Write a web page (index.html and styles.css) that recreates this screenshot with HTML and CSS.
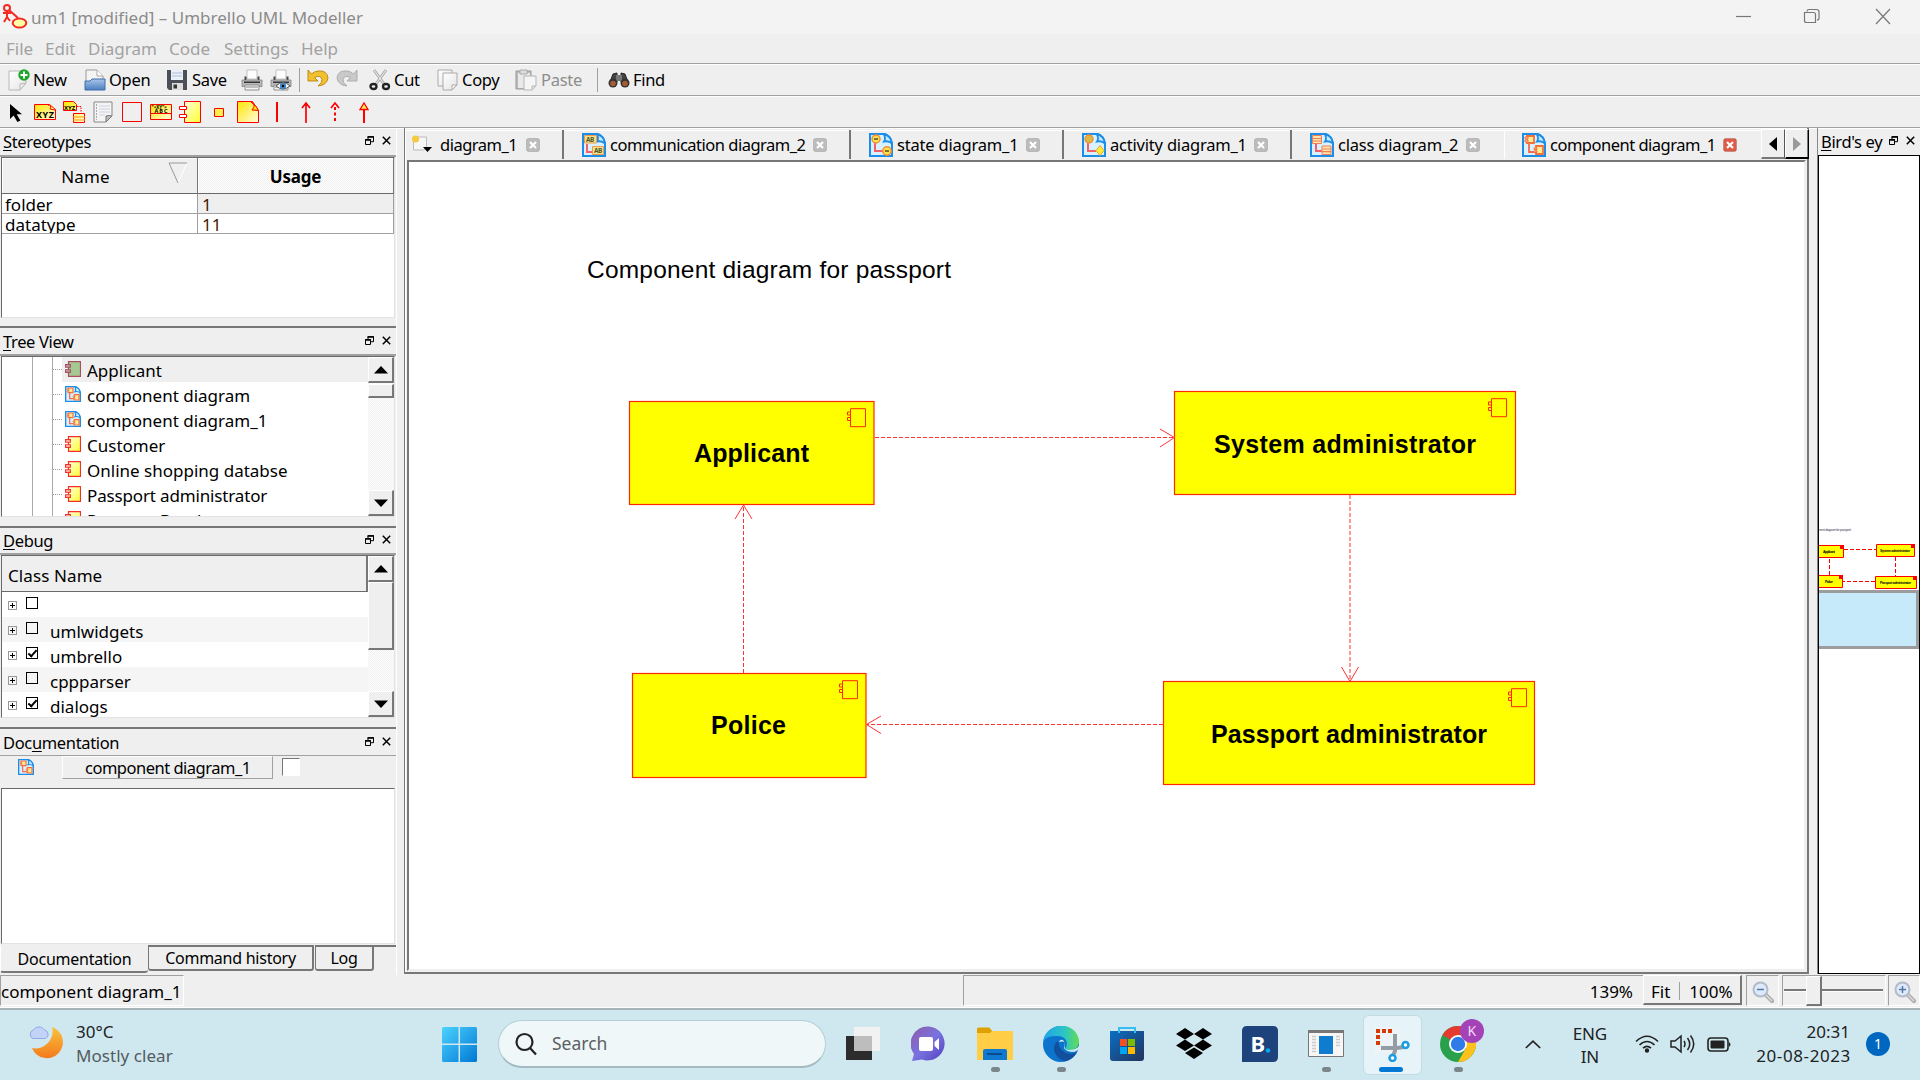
FILE: index.html
```html
<!DOCTYPE html>
<html lang="en">
<head>
<meta charset="utf-8">
<title>um1 [modified] – Umbrello UML Modeller</title>
<link rel="stylesheet" href="styles.css">
</head>
<body>
<svg class="defs" aria-hidden="true">
  <defs>
    <linearGradient id="gYellow" x1="0" x2="1" y1="0" y2="1"><stop offset="0" stop-color="#ffffe0"/><stop offset="1" stop-color="#ffff30"/></linearGradient>
    <linearGradient id="gGold" x1="0" x2="1" y1="0" y2="1"><stop offset="0" stop-color="#ffe600"/><stop offset="1" stop-color="#fffde0"/></linearGradient>
    <linearGradient id="gBlue" x1="0" x2="1" y1="0" y2="1"><stop offset="0" stop-color="#4cd3ff"/><stop offset="1" stop-color="#0078d4"/></linearGradient>
    <linearGradient id="gFolder" x1="0" x2="0" y1="0" y2="1"><stop offset="0" stop-color="#a9c6ea"/><stop offset="1" stop-color="#4c7fc0"/></linearGradient>
    <linearGradient id="gPaper" x1="0" x2="1" y1="0" y2="1"><stop offset="0" stop-color="#fff"/><stop offset="1" stop-color="#e4e4e4"/></linearGradient>
    <symbol id="component" viewBox="0 0 16 16"><path d="M3.5.7h12v14.6h-12z" fill="url(#gYellow)" stroke="#f3302a" stroke-width="1.2"/><path d="M.6 3.6h4.8v2.6H.6zM.6 8.8h4.8v2.6H.6z" fill="#ffd9c0" stroke="#f3302a" stroke-width="1.1"/></symbol>
    <symbol id="component-sel" viewBox="0 0 16 16"><path d="M3.5.7h12v14.6h-12z" fill="#a5c992" stroke="#a8505e" stroke-width="1.2"/><path d="M.6 3.6h4.8v2.6H.6zM.6 8.8h4.8v2.6H.6z" fill="#b9a9b5" stroke="#a8505e" stroke-width="1.1"/></symbol>
    <symbol id="page" viewBox="0 0 24 24"><path d="M1 1h15q5 2 7 9v13H1z" fill="#d9f1ff" stroke="#1c8ee8" stroke-width="2"/><path d="M15 1.500q7 1 8 9-3-3-8-2 2-3 0-7z" fill="#c4e8ff" stroke="#1c8ee8" stroke-width="1.800"/></symbol>
    <symbol id="dia-component" viewBox="0 0 24 24"><use href="#page"/><path d="M7 10v9h7" fill="none" stroke="#f06a50" stroke-width="1.800"/><path d="M5 3h7v7H5zM14 13h7v8h-7z" fill="#ffec9a" stroke="#f5703a" stroke-width="1.800"/><path d="M3 4h3v2H3zM3 7h3v2H3zM12 15h3v1.500h-3zM12 18h3v1.500h-3z" fill="#ffd9c0" stroke="#f5703a"/></symbol>
    <symbol id="dia-communication" viewBox="0 0 24 24"><use href="#page"/><path d="M5 11v8h6" fill="none" stroke="#f4606a" stroke-width="2"/><path d="M2.500 2.500h12v7.500h-12zM10.500 13.500h11v8h-11z" fill="#f3e38c" stroke="#f09a4a"/><text x="4" y="8.700" font-size="6.500" font-weight="700" fill="#55552a">AB</text><text x="12" y="20" font-size="6.500" font-weight="700" fill="#55552a">AB</text></symbol>
    <symbol id="dia-state" viewBox="0 0 24 24"><use href="#page"/><path d="M6 9v9h8" fill="none" stroke="#f4606a" stroke-width="2"/><circle cx="7" cy="6" r="4" fill="#ffe14e" stroke="#f0903a" stroke-width="1.500"/><circle cx="18" cy="18" r="4.200" fill="#ffe14e" stroke="#f0903a" stroke-width="1.500"/><path d="M5 6h4M16 18h4" stroke="#86702a" stroke-width="2"/></symbol>
    <symbol id="dia-activity" viewBox="0 0 24 24"><use href="#page"/><path d="M6 9v9h8" fill="none" stroke="#f4606a" stroke-width="2"/><circle cx="7" cy="6" r="4" fill="#d9b84a" stroke="#f0903a" stroke-width="1.500"/><path d="M18 12.500l4 5-4 5-4-5z" fill="#ffee30" stroke="#f0a03a"/></symbol>
    <symbol id="dia-class" viewBox="0 0 24 24"><use href="#page"/><path d="M6 10v8h7" fill="none" stroke="#f4606a" stroke-width="2"/><path d="M2.500 2.500h9v8h-9zM12 13h9v8.500h-9z" fill="#ffe3b0" stroke="#f08052"/><path d="M3 5.500h8.500M12.500 16h8.500M3 8h8.500M12.500 18.700h8.500" stroke="#f08052" stroke-width="1.200"/></symbol>
    <symbol id="printer" viewBox="0 0 22 22"><path d="M6 1h10v9H6z" fill="#fdfdfd" stroke="#aaa" stroke-width=".7"/><path d="M3.500 7.500h2v4h11v-4h2V12h-15z" fill="#444"/><path d="M1 11h20v6.500H1z" fill="#bababa" stroke="#777" stroke-width=".7"/><path d="M3 12.500h16v1.500H3z" fill="#333"/><path d="M4 16h14v5H4z" fill="#f4f4f4" stroke="#777" stroke-width=".8"/><path d="M5 18h12" stroke="#888"/></symbol>
    <symbol id="float" viewBox="0 0 9 9"><path d="M3 3V.7h5.500v5H6" fill="none" stroke="#000"/><path d="M2.500 1h6.500M0 4h6" stroke="#000" stroke-width="1.700"/><path d="M.5 3.500h5v5h-5z" fill="none" stroke="#000"/></symbol>
    <symbol id="cross" viewBox="0 0 9 9"><path d="M.8.8l7.400 7.400M8.200.8L.8 8.200" stroke="#000" stroke-width="1.500"/></symbol>
    <symbol id="up" viewBox="0 0 14 8"><path d="M7 0l7 7.500H0z"/></symbol>
    <symbol id="down" viewBox="0 0 14 8"><path d="M7 8L0 .5h14z"/></symbol>
    <symbol id="tabclose" viewBox="0 0 14 14"><rect x=".5" y=".5" width="13" height="13" rx="2" fill="currentColor" stroke="#0002"/><path d="M4 4l6 6M10 4l-6 6" stroke="#fff" stroke-width="2.200"/></symbol>
    <symbol id="lens" viewBox="0 0 22 22"><path d="M13 13l7 7" stroke="#aaa" stroke-width="4" stroke-linecap="round"/><path d="M13 13l7 7" stroke="#ddd" stroke-width="1.500"/><circle cx="8.500" cy="8.500" r="7" fill="#dceafb" stroke="#b3bac8" stroke-width="2"/></symbol>
    <symbol id="node" viewBox="0 0 20 20"><path d="M4.500.7h15v18h-15z" fill="none" stroke="#ff2a00"/><path d="M1.500 4h3v3h-3zM1.500 9.500h3v3h-3z" fill="none" stroke="#ff2a00"/></symbol>
  </defs>
</svg>

<header class="titlebar">
  <svg class="logo" viewBox="0 0 26 26"><g fill="none" stroke="#f22b22" stroke-width="2"><circle cx="5" cy="4" r="3"/><path d="M5 7v6M1 9h8M5 13l-3 5M5 13l3 4M7 6l9 8"/></g><ellipse cx="17.500" cy="19" rx="6.800" ry="4.600" fill="#ffffa8" stroke="#f22b22" stroke-width="2"/></svg>
  <h1 class="title">um1 [modified] – Umbrello UML Modeller</h1>
  <svg class="winbtns" viewBox="0 0 176 34" fill="none" stroke="#777" stroke-width="1.200"><path d="M16 16.500h15"/><path d="M84.500 13.500h9q2 0 2 2v8H86.500q-2 0-2-2zM87 12.500q0-2 2-2h7.500q2.500 0 2.500 2.500V19q0 2-2 2" transform="translate(0 -1)"/><path d="M156 9l14 15M170 9l-14 15"/></svg>
</header>

<nav class="menubar"><span>File</span><span>Edit</span><span>Diagram</span><span>Code</span><span>Settings</span><span>Help</span></nav>

<div class="toolbar main-tools">
  <div class="tool"><svg viewBox="0 0 22 22"><path d="M1 2h17v12l-6 7H1z" fill="url(#gPaper)" stroke="#b8b8b8"/><path d="M18 14l-6 7v-6z" fill="#eee" stroke="#b8b8b8"/><circle cx="16" cy="6" r="5.700" fill="#1fa62b"/><path d="M16 2.500v7M12.500 6h7" stroke="#fff" stroke-width="2"/></svg>New</div>
  <div class="tool"><svg viewBox="0 0 22 22"><path d="M2 1h11l6 6v9H2z" fill="#f4f4f4" stroke="#999"/><path d="M13 1v6h6" fill="#fff" stroke="#aaa"/><path d="M1 12h5l2-2h13v11H1z" fill="url(#gFolder)" stroke="#3f6dab"/></svg>Open</div>
  <div class="tool"><svg class="disk" viewBox="0 0 22 22"><path d="M1 1h20v20H3l-2-2z" fill="#4a4f58"/><path d="M5 1h12v10H5z" fill="#e9f0f8"/><path d="M6 4h10M6 7h10" stroke="#a9bdd3"/><path d="M6 14h11v7H6z" fill="#ddd"/><path d="M7.500 15.500h3.500v4H7.500z" fill="#333"/></svg>Save</div>
  <div class="tool"><svg><use href="#printer"/></svg></div>
  <div class="tool"><svg viewBox="0 0 22 22"><use href="#printer"/><path d="M6 17q7-7 14 0-7 6-14 0z" fill="#fff" stroke="#555"/><circle cx="13" cy="17" r="3.200" fill="#4184c4"/><circle cx="13" cy="17" r="1.200"/></svg></div>
  <i class="sep"></i>
  <div class="tool"><svg class="raise" viewBox="0 0 22 20"><path d="M1 1v11h10L7.500 8.500q6-3 7.500 2 .5 3-4 6.500 9-1 10-8Q20 1 11 2 7 2.500 4.500 5z" fill="#f0c02e" stroke="#c08b12"/></svg></div>
  <div class="tool"><svg class="raise" viewBox="0 0 22 20"><path d="M21 1v11H11l3.500-3.500q-6-3-7.500 2-.5 3 4 6.500Q2 16 1 9 2 1 11 2q4 .5 6.500 3z" fill="#c9c9c9" stroke="#adadad"/></svg></div>
  <div class="tool"><svg viewBox="0 0 22 22"><path d="M5 1l10 14M17 1L7 15" stroke="#999" stroke-width="2.600"/><path d="M5 1l10 14M17 1L7 15" stroke="#eee" stroke-width="1.200"/><g fill="none" stroke="#222" stroke-width="2.300"><ellipse cx="4.500" cy="17.500" rx="3" ry="2.500"/><ellipse cx="17" cy="17.500" rx="3" ry="2.500"/></g></svg><span>Cut</span></div>
  <div class="tool"><svg viewBox="0 0 22 22" fill="url(#gPaper)" stroke="#aaa"><path d="M1 1h14v16H1z"/><path d="M6 4h14v12l-5 5H6z"/><path d="M20 16l-5 5v-5z"/></svg><span>Copy</span></div>
  <div class="tool off"><svg viewBox="0 0 22 22"><path d="M1 2h15v18H1z" fill="#bbb" stroke="#999"/><path d="M3 4h12v15H3z" fill="#e9e9e9"/><path d="M5 1h7v4H5z" fill="#ddd" stroke="#aaa"/><path d="M9 7h12v10l-4 4H9z" fill="#f5f5f5" stroke="#b5b5b5"/><path d="M21 17l-4 4v-4z" fill="#ddd" stroke="#bbb"/></svg><span>Paste</span></div>
  <i class="sep"></i>
  <div class="tool"><svg viewBox="0 0 22 22"><path d="M5 5l4-1v9H2zM17 5l-4-1v9h7z" fill="#444" stroke="#222"/><path d="M8 6h6v6H8z" fill="#777"/><circle cx="5" cy="14" r="4.500" fill="#333"/><circle cx="17" cy="14" r="4.500" fill="#333"/><circle cx="5" cy="14.500" r="2.800" fill="#a65c34"/><circle cx="17" cy="14.500" r="2.800" fill="#a65c34"/></svg>Find</div>
</div>

<div class="toolbar shape-tools">
  <svg viewBox="0 0 22 22"><path d="M5 3v15l3.600-3.500 3.800 6.500 3-1.600-3.700-6.200H17z" fill="#000"/></svg>
  <svg viewBox="0 0 22 22"><path d="M.5 3.500h15l6 5v10H.5z" fill="url(#gGold)" stroke="red"/><path d="M14 4q4 0 2 4l5 1" fill="#ff3" stroke="red"/><text x="2" y="17" font-size="9" font-weight="700" textLength="18">XYZ</text></svg>
  <svg viewBox="0 0 22 22"><path d="M.5.500h10l3 3v6H.5zM10.500 12.500h11v9h-11z" fill="url(#gGold)" stroke="red"/><path d="M10 16h12M10 19h12" stroke="#f90"/><text x="1" y="8.500" font-size="6" font-weight="700">XYZ</text><path d="M14 5.500h4v6" fill="none" stroke="red" stroke-dasharray="1.500 1"/></svg>
  <svg viewBox="0 0 22 22"><path d="M2 1h18v14l-6 6H2z" fill="#f4f4f6" stroke="#888"/><path d="M7 5h11M7 8h11M7 11h11M7 14h6" stroke="#ccd3dc"/><path d="M4.500 3v16" stroke="#aaa" stroke-dasharray="2 1"/><path d="M20 15q-4-1-6 0l0 6z" fill="#bbb" stroke="#777"/></svg>
  <svg viewBox="0 0 22 22"><path d="M1.500 1.500h19v19h-19z" fill="none" stroke="red"/></svg>
  <svg viewBox="0 0 22 22"><path d="M.5 3.500h21v15H.5z" fill="url(#gGold)" stroke="red"/><path d="M.5 12.500h21" stroke="red"/><text x="1.500" y="7.500" font-size="4.500" font-weight="700">"&lt;XY"&gt;</text><text x="4.500" y="11.700" font-size="5.500" font-weight="700" textLength="13">ABC</text></svg>
  <svg viewBox="0 0 22 22"><path d="M5.500.5h16v21h-16z" fill="url(#gYellow)" stroke="red"/><path d="M.5 5.500h7v3h-7zM.5 13.500h7v3h-7z" fill="#fff" stroke="red"/></svg>
  <svg viewBox="0 0 22 22"><path d="M6.500 7.500h9v8h-9z" fill="#ffee50" stroke="red"/></svg>
  <svg viewBox="0 0 22 22"><path d="M.5.500h15l6 9v12H.5z" fill="url(#gGold)" stroke="red"/><path d="M14 1q6 2 1 8l6.500.5Q20 5 14 1z" fill="#ffe600" stroke="red"/></svg>
  <svg viewBox="0 0 22 22"><path d="M11 1v20" stroke="red" stroke-width="2"/></svg>
  <svg viewBox="0 0 22 22"><path d="M11 2v20M7 7l4-5 4 5" fill="none" stroke="red" stroke-width="1.700"/></svg>
  <svg viewBox="0 0 22 22"><path d="M11 6v16" stroke="red" stroke-width="2" stroke-dasharray="3 2.500"/><path d="M7 7l4-5 4 5" fill="none" stroke="red" stroke-width="1.700"/></svg>
  <svg viewBox="0 0 22 22"><path d="M11 9v13" stroke="red" stroke-width="2"/><path d="M7 8.500l4-6.500 4 6.500z" fill="#fe5" stroke="red" stroke-width="1.300"/></svg>
</div>

<main class="workspace">
  <aside class="docks">
    <section class="dock stereo">
      <div class="dock-title"><span><u>S</u>tereotypes</span><svg class="fl"><use href="#float"/></svg><svg class="cl"><use href="#cross"/></svg></div>
      <div class="sunken">
        <div class="st-grid">
          <div class="th">Name<svg class="sort" viewBox="0 0 20 22"><path d="M19 1L10 21" stroke="#fff" fill="none"/><path d="M19 1H1l9 20" stroke="#999" fill="none"/></svg></div>
          <div class="th usage">Usage</div>
          <div class="td">folder</div><div class="td num alt">1</div>
          <div class="td clip">datatype</div><div class="td num">11</div>
        </div>
      </div>
    </section>

    <section class="dock treeview">
      <div class="dock-title"><span><u>T</u>ree View</span><svg class="fl"><use href="#float"/></svg><svg class="cl"><use href="#cross"/></svg></div>
      <div class="sunken row">
        <div class="tree">
          <div class="leaf sel"><svg><use href="#component-sel"/></svg><span>Applicant</span></div>
          <div class="leaf"><svg><use href="#dia-component"/></svg><span>component diagram</span></div>
          <div class="leaf"><svg><use href="#dia-component"/></svg><span>component diagram_1</span></div>
          <div class="leaf"><svg><use href="#component"/></svg><span>Customer</span></div>
          <div class="leaf"><svg><use href="#component"/></svg><span>Online shopping databse</span></div>
          <div class="leaf"><svg><use href="#component"/></svg><span class="tight">Passport administrator</span></div>
          <div class="leaf"><svg><use href="#component"/></svg><span class="tight">Passport Database</span></div>
        </div>
        <div class="scroll"><b class="sb"><svg><use href="#up"/></svg></b><b class="thumb t1"></b><i></i><b class="sb"><svg><use href="#down"/></svg></b></div>
      </div>
    </section>

    <section class="dock debug">
      <div class="dock-title"><span><u>D</u>ebug</span><svg class="fl"><use href="#float"/></svg><svg class="cl"><use href="#cross"/></svg></div>
      <div class="sunken row">
        <div class="dbg">
          <div class="dbg-head">Class Name</div>
          <div class="dbg-row"><i class="plus"></i><i class="chk"></i><span></span></div>
          <div class="dbg-row odd"><i class="plus"></i><i class="chk"></i><span>umlwidgets</span></div>
          <div class="dbg-row"><i class="plus"></i><i class="chk on"></i><span>umbrello</span></div>
          <div class="dbg-row odd"><i class="plus"></i><i class="chk"></i><span>cppparser</span></div>
          <div class="dbg-row"><i class="plus"></i><i class="chk on"></i><span>dialogs</span></div>
        </div>
        <div class="scroll"><b class="sb"><svg><use href="#up"/></svg></b><b class="thumb t2"></b><i></i><b class="sb"><svg><use href="#down"/></svg></b></div>
      </div>
    </section>

    <section class="dock docs">
      <div class="dock-title"><span>Doc<u>u</u>mentation</span><svg class="fl"><use href="#float"/></svg><svg class="cl"><use href="#cross"/></svg></div>
      <div class="doc-row"><svg><use href="#dia-component"/></svg><div class="doc-name">component diagram_1</div><i class="docchk"></i></div>
      <div class="sunken"></div>
      <div class="doc-tabs"><span class="dt cur">Documentation</span><span class="dt d2">Command history</span><span class="dt d3">Log</span><i></i></div>
    </section>
  </aside>

  <section class="mdi">
    <div class="tabs">
      <div class="tab w1"><svg class="newtab" viewBox="0 0 22 20"><path d="M2.500 2h13v11l-3 2H2.500z" fill="#f6f6f6" stroke="#bbb"/><circle cx="4.500" cy="4" r="3.500" fill="#f7c93c"/><path d="M12 12h9l-4.500 5z"/></svg><span>diagram_1</span><svg class="x"><use href="#tabclose"/></svg></div>
      <div class="tab w2"><svg class="ti"><use href="#dia-communication"/></svg><span>communication diagram_2</span><svg class="x"><use href="#tabclose"/></svg></div>
      <div class="tab w3"><svg class="ti"><use href="#dia-state"/></svg><span>state diagram_1</span><svg class="x"><use href="#tabclose"/></svg></div>
      <div class="tab w4"><svg class="ti"><use href="#dia-activity"/></svg><span>activity diagram_1</span><svg class="x"><use href="#tabclose"/></svg></div>
      <div class="tab w5"><svg class="ti"><use href="#dia-class"/></svg><span>class diagram_2</span><svg class="x"><use href="#tabclose"/></svg></div>
      <div class="tab w6"><svg class="ti"><use href="#dia-component"/></svg><span>component diagram_1</span><svg class="x red"><use href="#tabclose"/></svg></div>
      <div class="arrow"><svg viewBox="0 0 8 14"><path d="M8 0v14L0 7z"/></svg></div>
      <div class="arrow dark"><svg viewBox="0 0 8 14"><path d="M0 0v14l8-7z" fill="#999"/></svg></div>
    </div>
    <div class="canvas">
      <svg viewBox="409 162 1397 807">
        <text class="caption" x="587" y="278" textLength="364">Component diagram for passport</text>
        <g fill="#ff0" stroke="#ff2a00" stroke-width="1.200">
          <rect x="629.500" y="401.500" width="244.500" height="103"/>
          <rect x="1174.500" y="391.500" width="341" height="103"/>
          <rect x="632.500" y="673.500" width="233.500" height="104"/>
          <rect x="1163.500" y="681.500" width="371" height="103"/>
        </g>
        <use href="#node" x="846" y="408" width="20" height="20"/>
        <use href="#node" x="1487" y="398" width="20" height="20"/>
        <use href="#node" x="838" y="680" width="20" height="20"/>
        <use href="#node" x="1507" y="688" width="20" height="20"/>
        <g fill="none" stroke="#f33">
          <path d="M875 437.500h299M1163 724.500H867" stroke-dasharray="4 2"/>
          <path d="M743.500 673V505" stroke-dasharray="4 2"/>
          <path d="M1350 495v186" stroke-dasharray="4 2"/>
          <path d="M1160 429l14.500 8.500-14.500 9.500M881 716l-14.500 8.500 14.500 9M1341.500 667l8.500 14.500 8.500-14.500M735 519l8.500-14 8.500 14"/>
        </g>
        <g class="label">
          <text x="694" y="462" textLength="115">Applicant</text>
          <text x="1214" y="453" textLength="262">System administrator</text>
          <text x="711" y="734" textLength="75">Police</text>
          <text x="1211" y="743" textLength="276">Passport administrator</text>
        </g>
      </svg>
    </div>
  </section>

  <aside class="birdseye">
    <div class="dock-title"><span><u>B</u>ird's ey</span><svg class="fl"><use href="#float"/></svg><svg class="cl"><use href="#cross"/></svg></div>
    <div class="overview">
      <svg viewBox="1819 156 100 816">
        <text x="1819" y="530.500" font-size="3.500" textLength="32" fill="#446">nent diagram for passport</text>
        <path d="M1844 549.500h32M1875 581.500h-32M1829.500 575v-17M1895.500 557v19" stroke="#f00" stroke-dasharray="4 2"/>
        <g fill="#ff0" stroke="#f00"><path d="M1815.500 545.500h28v12h-28zM1876.500 544.500h38v12h-38zM1815.500 575.500h27v12h-27zM1875.500 576.500h41v12h-41z"/></g>
        <g fill="#f00"><path d="M1840 545h4v4h-4zM1911 544h4v4h-4zM1839 575h4v4h-4zM1913 576h4v4h-4z"/></g>
        <g font-size="3.500" font-weight="700"><text x="1823" y="552.500" textLength="12">Applicant</text><text x="1880" y="551.500" textLength="30">System administrator</text><text x="1825" y="582.500" textLength="8">Police</text><text x="1880" y="583.500" textLength="31">Passport administrator</text></g>
        <path d="M1817.500 591.500h100v56h-100z" fill="#c7eafa" stroke="#9c9c9c" stroke-width="3"/>
      </svg>
    </div>
  </aside>
</main>

<footer class="statusbar">
  <div class="st-name">component diagram_1</div>
  <div class="st-mid">139%</div>
  <div class="st-btn"><span>Fit</span><i></i><span>100%</span></div>
  <div class="cell zo"><svg viewBox="0 0 22 22"><use href="#lens"/><path d="M5 8.500h7" stroke="#5577a5" stroke-width="1.500"/></svg></div>
  <div class="cell slider"><i class="groove"></i><b class="knob"></b></div>
  <div class="cell zi"><svg viewBox="0 0 22 22"><use href="#lens"/><path d="M5 8.500h7M8.500 5v7" stroke="#5577a5" stroke-width="1.500"/></svg></div>
</footer>

<div class="taskbar">
  <div class="weather">
    <svg viewBox="0 0 36 36"><defs><linearGradient id="moon" x1="0" x2="0" y1="0" y2="1"><stop offset="0" stop-color="#f8c33e"/><stop offset="1" stop-color="#f47a1c"/></linearGradient></defs><path d="M24 3a17 17 0 0 1-20 21A16 16 0 1 0 24 3z" fill="url(#moon)"/><path d="M5 14.500a4.500 4.500 0 0 1 .5-8.500 6.500 6.500 0 0 1 11 0 4.500 4.500 0 0 1 1 8.500z" fill="#c3d3f8" stroke="#8fa8e6"/></svg>
    <div><p>30°C</p><p class="dim">Mostly clear</p></div>
  </div>
  <svg class="start" viewBox="0 0 35 35" fill="url(#gBlue)"><path d="M0 1.500Q0 0 1.500 0H16.500V16.500H0zM18 0h15.500Q35 0 35 1.500V16.500H18zM0 18h16.500v17H1.500Q0 35 0 33.500zM18 18h17v15.500q0 1.500-1.500 1.500H18z"/></svg>
  <div class="search"><svg viewBox="0 0 24 24" fill="none" stroke="#222" stroke-width="2.200"><circle cx="10.500" cy="10" r="8"/><path d="M16 16l6 6.500"/></svg>Search</div>
  <div class="apps">
    <div class="app"><svg viewBox="0 0 36 36"><path d="M1 10h26v24H1z" fill="#2c2c2c"/><path d="M9 1h26v24H9z" fill="#f2f2f2"/><path d="M9 10h18v15H9z" fill="#bdbdbd"/></svg></div>
    <div class="app"><svg viewBox="0 0 36 36"><defs><linearGradient id="chat" x1="0" x2="1" y1="0" y2="1"><stop offset="0" stop-color="#8d5aa6"/><stop offset=".5" stop-color="#7a73e0"/><stop offset="1" stop-color="#5040c0"/></linearGradient></defs><path d="M18 .5a17 17 0 1 1-7 33L1 35l2-7A17.300 17.300 0 0 1 18 .5z" fill="url(#chat)"/><rect x="8" y="11" width="14" height="14" rx="2" fill="#fff"/><path d="M23.500 16l4.500-4v12l-4.500-4z" fill="#fff"/></svg></div>
    <div class="app run"><svg viewBox="0 0 36 36"><path d="M0 3q0-1.500 1.500-1.500H12l3 3V10H0z" fill="#dfa000"/><path d="M0 7h13l2-2h20q1 0 1 1v28H0z" fill="#ffce46"/><path d="M6 34V25q0-2 2-2h20q2 0 2 2v9z" fill="#0f78cf"/><path d="M10 28h15" stroke="#084b92" stroke-width="2"/></svg></div>
    <div class="app run"><svg viewBox="0 0 36 36"><defs><linearGradient id="edge" x1="0" x2="1"><stop offset="0" stop-color="#1fa3e8"/><stop offset=".6" stop-color="#2cc5c5"/><stop offset="1" stop-color="#63dd52"/></linearGradient></defs><circle cx="18" cy="18" r="18" fill="#0c74cc"/><path d="M0 17C2-5 34-6 36 15c0 9-9 11-14 8 5-8-1-14-9-13C5 10 1 13 0 17z" fill="url(#edge)"/><path d="M15 15c-8 5-3 18 7 20 6-1 10-5 12-9-7 4-18 1-19-11z" fill="#124f9c"/><path d="M16 16q1-3 4-2 3 3 1 8 2 4 10 4 3-1 5-3v-3q-3 4-10 4-5 0-4-4 1-6-6-4z" fill="#cfe8ef"/></svg></div>
    <div class="app"><svg viewBox="0 0 36 36"><defs><linearGradient id="store" x1="0" x2="1" y1="0" y2="1"><stop offset="0" stop-color="#0a6fc4"/><stop offset="1" stop-color="#23335c"/></linearGradient></defs><path d="M1 5h34v27q0 3-3 3H4q-3 0-3-3z" fill="url(#store)"/><path d="M10 7V2h16v5" fill="none" stroke="#35bff0" stroke-width="2"/><path d="M11 13h7v7h-7z" fill="#f25022"/><path d="M19 13h7v7h-7z" fill="#7fba00"/><path d="M11 21h7v7h-7z" fill="#00a4ef"/><path d="M19 21h7v7h-7z" fill="#ffb900"/></svg></div>
    <div class="app"><svg viewBox="0 0 36 36"><path d="M9 2l9 6-9 5.500L0 8zM27 2l9 6-9 5.500L18 8zM9 13.500l9 6-9 5.500-9-5.500zM27 13.500l9 6-9 5.500-9-5.500zM18 21.500l9 5.500-9 6-9-6z"/></svg></div>
    <div class="app"><svg viewBox="0 0 36 36"><path d="M0 5q0-5 5-5h26q5 0 5 5v26q0 5-5 5H0z" fill="#1e427c"/><text x="8.500" y="26" font-size="22" font-weight="700" fill="#fff">B</text><circle cx="26" cy="24.500" r="2.300" fill="#00a8f0"/></svg></div>
    <div class="app run"><svg viewBox="0 0 36 36"><path d="M.5 4.500h35v26H.5z" fill="#f6f6f6" stroke="#777"/><path d="M0 4h36v3H0z" fill="#777"/><path d="M11 10h14v18H11z" fill="#0f7cd0"/><path d="M4 10.500h4M4 13.500h4M4 16.500h4M4 19.500h4M4 22.500h4M4 25.500h4M28 10.500h4M28 13.500h4M28 16.500h4M28 19.500h4" stroke="#ccc" stroke-width="1.500"/></svg></div>
    <div class="app active"><svg viewBox="0 0 36 36"><path d="M0 1h26v26H0z" fill="#f0f3f6" opacity=".8"/><path d="M21 8v17l-3 7M7 22h16l7-1" fill="none" stroke="#949da6" stroke-width="4"/><path d="M2 5h18M4 3v18" stroke="#d83b01" stroke-width="4" stroke-dasharray="4 2"/><g fill="#fff" stroke="#1b9de2" stroke-width="2.500"><circle cx="31.500" cy="19" r="3"/><circle cx="18.500" cy="32" r="3"/></g></svg></div>
    <div class="app run"><svg viewBox="0 0 36 36"><circle cx="18" cy="18" r="18" fill="#29a04b"/><path d="M18 18L2.400 9A18 18 0 0 1 33.600 9z" fill="#e53a30"/><path d="M18 9h15.600A18 18 0 0 1 18 36l8-14z" fill="#fcc21b"/><circle cx="18" cy="18" r="9" fill="#fff"/><circle cx="18" cy="18" r="7.200" fill="#2f7bea"/></svg><em class="kbadge">K</em></div>
  </div>
  <svg class="caret" viewBox="0 0 16 9" fill="none" stroke="#222" stroke-width="1.700"><path d="M.8 8L8 1.200 15.200 8"/></svg>
  <div class="lang">ENG<br>IN</div>
  <svg class="wifi" viewBox="0 0 24 18" fill="none" stroke="#222" stroke-width="1.600"><path d="M1 6.500q11-10.500 22 0M4.500 10q7.500-7 15 0M8 13.200q4-3.600 8 0"/><circle cx="12" cy="15.500" r="1.400" fill="#222"/></svg>
  <svg class="vol" viewBox="0 0 26 20" fill="none" stroke="#222" stroke-width="1.500"><path d="M1 7h4l6-5v16l-6-5H1zM14 7q2 3 0 6M17.500 4q4.500 6 0 12M20.500 1.500q6.500 8.500 0 17"/></svg>
  <svg class="bat" viewBox="0 0 25 15"><rect x="1" y="1" width="20" height="13" rx="3" fill="none" stroke="#222" stroke-width="1.600"/><rect x="3.500" y="3.500" width="14" height="8" rx="1" fill="#222"/><path d="M22 5q3 2.500 0 5z" fill="#222"/></svg>
  <div class="clock"><p>20:31</p><p class="date">20-08-2023</p></div>
  <div class="notif">1</div>
</div>
</body>
</html>
```
FILE: styles.css
```css
* { box-sizing: border-box; }
body { margin: 0; width: 1920px; height: 1080px; overflow: hidden; display: flex; flex-direction: column; background: #efefef; color: #000; font-family: "Noto Sans", sans-serif; font-size: 17px; line-height: 1; white-space: nowrap; }
.defs { position: absolute; width: 0; height: 0; }
svg { display: block; flex: none; }
i, em { font-style: normal; }
p { margin: 0; }

.titlebar { height: 34px; background: #f3f3f3; display: flex; align-items: center; flex: none; }
.logo { width: 26px; height: 26px; margin: 0 3px 0 2px; }
.title { margin: 0; flex: 1; font-size: 17px; font-weight: 400; color: #8b8b8b; letter-spacing: .02px; }
.winbtns { width: 176px; height: 34px; margin-right: 24px; }
.menubar { height: 29px; flex: none; display: grid; grid-template-columns: 39px 43px 81px 55px 77px 1fr; padding: 0 0 0 6px; align-items: center; color: #a2a2a2; font-size: 17px; }

.toolbar { height: 32px; flex: none; border-top: 1px solid #a0a0a0; box-shadow: inset 0 1px #fff; }
.main-tools { display: grid; grid-template-columns: 76px 83px 74px 29px 29px 8px 29px 33px 68px 78px 82px 11px 1fr; padding: 1px 0 0 8px; align-items: center; font-size: 16.5px; letter-spacing: -.3px; }
.tool { display: flex; align-items: center; gap: 3px; }
.tool svg { width: 22px; height: 22px; }
.tool .disk { margin-right: 1px; margin-left: -1px; }
.tool .raise { height: 20px; margin-top: -3px; }
.off { color: #8d8d8d; }
.off svg { margin-right: 1px; }
.sep { width: 1px; height: 24px; background: #a0a0a0; }
.shape-tools { display: grid; grid-template-columns: repeat(13, 29px); padding: 1px 0 0 1.5px; align-items: center; justify-items: center; }
.shape-tools svg { width: 22px; height: 22px; }

.workspace { height: 847px; flex: none; display: grid; grid-template-columns: 397px 7px 1405px 8px 103px; border-top: 1px solid #a0a0a0; box-shadow: inset 0 1px #fff; }
.docks { border-right: 1px solid #fff; display: flex; flex-direction: column; }
.dock { display: flex; flex-direction: column; flex: none; border-bottom: 2px solid #777; }
.stereo { height: 200px; padding-bottom: 8px; }
.treeview { height: 200px; padding-bottom: 9px; }
.debug { height: 201px; padding-bottom: 9px; }
.docs { height: 245px; border: 0; }
.dock-title { height: 27px; flex: none; display: flex; align-items: center; padding: 0 5px 0 3px; font-size: 16.5px; letter-spacing: -.35px; border-bottom: 2px solid #a0a0a0; }
.stereo .dock-title { height: 29px; }
.treeview .dock-title { height: 28px; }
.dock-title span { flex: 1; padding-top: 2px; }
.dock-title u { text-underline-offset: 2px; text-decoration-thickness: 1px; }
.dock-title svg { width: 9px; height: 9px; margin-bottom: 2px; }
.dock-title .fl { margin-right: 8px; }
.sunken { flex: 1; min-height: 0; margin: 0 1px 0 1px; background: #fff; border: 1px solid #696969; border-right-color: #e3e3e3; border-bottom-color: #e3e3e3; overflow: hidden; }
.row { display: flex; }

.st-grid { display: grid; grid-template-columns: 196px 196px; grid-template-rows: 36px 20px 20px; }
.th { position: relative; background: #efefef; border-right: 1px solid #777; border-bottom: 1px solid #696969; box-shadow: inset 1px 1px #fff; display: flex; align-items: center; justify-content: center; padding: 2px 28px 0 0; letter-spacing: .2px; }
.usage { padding-right: 0; font-weight: 700; letter-spacing: -.2px; background: repeating-conic-gradient(#fff 0 25%, #efefef 0 50%) 0 0 / 2px 2px; }
.sort { position: absolute; right: 9px; top: 4px; width: 20px; height: 22px; }
.td { border-right: 1px solid #a0a0a0; border-bottom: 1px solid #a0a0a0; padding: 0 0 0 3px; line-height: 21px; }
.clip { overflow: hidden; }
.num { padding-left: 4px; color: #402000; }
.alt { background: #efefef; }

.tree { flex: 1; background: linear-gradient(90deg, transparent 30px, #aaa 30px 31px, transparent 31px 50px, #aaa 50px 51px, transparent 51px); overflow: hidden; padding-left: 51px; }
.leaf { height: 25px; display: flex; align-items: center; letter-spacing: 0; }
.leaf::before { content: ""; width: 9px; border-top: 1px dotted #999; }
.leaf svg { width: 16px; height: 16px; margin: -2px 6px 0 3px; }
.leaf span { padding-top: 2px; }
.tight { letter-spacing: -.15px; }
.sel { background: linear-gradient(90deg, transparent 9px, #efefef 9px); }
.scroll { width: 26px; display: flex; flex-direction: column; background: repeating-conic-gradient(#fff 0 25%, #efefef 0 50%) 0 0 / 2px 2px; }
.scroll > i { flex: 1; }
.sb, .thumb { background: #efefef; border: 1px solid #fff; border-right: 2px solid #777; border-bottom: 2px solid #777; display: flex; align-items: center; justify-content: center; }
.sb { height: 26px; flex: none; }
.sb svg { width: 14px; height: 8px; }
.t1 { height: 14px; margin-top: 1px; }
.t2 { height: 68px; }

.dbg { flex: 1; }
.dbg-head { height: 36px; background: #efefef; border-right: 2px solid #777; border-bottom: 1px solid #696969; padding: 11px 0 0 6px; letter-spacing: .1px; }
.dbg-row { height: 25px; display: flex; background: #fff; padding: 5px 0 0 6px; }
.odd { background: #f5f5f5; }
.plus { width: 9px; height: 9px; margin-top: 4px; border: 1px solid #999; background: linear-gradient(#000, #000) center / 5px 1px no-repeat, linear-gradient(#000, #000) center / 1px 5px no-repeat; }
.chk { width: 12px; height: 12px; margin: 0 12px 0 9px; border: 1px solid #000; }
.on::after { content: ""; display: block; width: 7px; height: 3px; margin: 2px 0 0 1px; border: solid #000; border-width: 0 0 2px 2px; transform: rotate(-48deg); }
.dbg-row span { padding-top: 1px; }

.doc-row { height: 32px; display: flex; align-items: flex-start; flex: none; padding-left: 18px; }
.docs .dock-title { border-bottom: 1px solid #a0a0a0; }
.doc-row svg { width: 16px; height: 16px; margin: 3px 28px 0 0; }
.doc-name { width: 211px; height: 23px; border: 1px solid #fff; border-right-color: #a0a0a0; border-bottom-color: #a0a0a0; padding: 3px 0 0 22px; font-size: 16.5px; letter-spacing: -.5px; }
.docchk { width: 18px; height: 18px; margin: 2px 0 0 9px; background: #fff; border: 1px solid #777; border-right-color: #fff; border-bottom-color: #fff; }
.doc-tabs { height: 30px; flex: none; display: flex; padding-top: 1px; font-size: 16px; letter-spacing: -.25px; }
.dt { height: 26px; border: 1px solid #777; border-right-width: 2px; border-bottom-width: 2px; border-top: 2px solid #777; padding-top: 3px; text-align: center; border-radius: 0 0 3px 3px; }
.cur { width: 148px; height: 28px; border-top: 0; border-right: 0; border-left-color: #fff; padding: 6px 0 0; }
.d2 { width: 166px; margin-right: 1px; }
.d3 { width: 59px; }
.doc-tabs > i { flex: 1; border-top: 2px solid #777; }

.mdi { grid-column: 3; border: 1px solid #777; border-width: 0 2px 2px 1px; margin-bottom: 1px; display: flex; flex-direction: column; box-shadow: inset 1px 0 #fff; }
.tabs { height: 32px; flex: none; display: flex; }
.tab { flex: none; height: 29px; margin-top: 2px; display: flex; align-items: center; font-size: 16.5px; letter-spacing: -.5px; border-right: 2px solid #777; box-shadow: inset 0 1px #fff; }
.tab span { flex: none; padding-top: 1px; }
.ti { width: 24px; height: 24px; margin-right: 4px; }
.newtab { width: 22px; height: 20px; margin-right: 7px; }
.x { width: 14px; height: 14px; margin-left: auto; color: #bcbcbc; }
.red { color: #dd5a48; }
.w1 { width: 159px; padding: 0 22px 0 6px; }
.w2 { width: 287px; padding: 0 22px 0 18px; }
.w3 { width: 213px; padding: 0 22px 0 18px; letter-spacing: -.2px; }
.w4 { width: 228px; padding: 0 22px 0 18px; letter-spacing: -.2px; }
.w5 { width: 213px; padding: 0 24px 0 18px; border-right: 1px solid #fff; letter-spacing: -.2px; }
.w6 { width: 256px; padding: 0 24px 0 17px; border: 0; }
.arrow { flex: none; width: 24px; height: 30px; margin-top: 1px; border: 1px solid #fff; border-right: 1px solid #555; border-bottom: 2px solid #777; display: flex; align-items: center; justify-content: center; }
.arrow svg { width: 8px; height: 14px; }
.dark { border-bottom-color: #000; border-right-color: #000; }
.canvas { flex: 1; margin: 0 1px 1px 2px; border: 2px solid #777; border-color: #777 #eee #eee #777; background: #fff; overflow: hidden; }
.canvas svg { width: 1397px; height: 807px; font-family: "Liberation Sans", sans-serif; }
.caption { font-size: 24.5px; }
.label { font-size: 25px; font-weight: 700; }

.birdseye { grid-column: 5; display: flex; flex-direction: column; border-left: 1px solid #888; margin-bottom: 1px; }
.birdseye .dock-title { border: 0; height: 27px; padding: 0 5px 1px 3px; }
.overview { flex: 1; border: 1px solid #000; background: #fff; overflow: hidden; }
.overview svg { width: 100px; height: 816px; font-family: "Liberation Sans", sans-serif; }

.statusbar { height: 36px; flex: none; display: flex; align-items: flex-start; border-bottom: 2px solid #a5b5ba; padding-top: 1px; box-shadow: inset 0 -1px #fff; }
.statusbar > div { flex: none; }
.st-name { width: 184px; height: 31px; border: 1px solid #a0a0a0; border-right-color: #fff; border-bottom-color: #fff; padding: 7px 0 0 0; letter-spacing: 0; }
.st-mid { width: 680px; height: 31px; margin-left: 779px; border: 1px solid #a0a0a0; border-right: 0; border-bottom-color: #fff; text-align: right; padding: 7px 10px 0 0; }
.st-btn { width: 99px; height: 30px; border: 1px solid #fff; border-right: 2px solid #777; border-bottom: 2px solid #777; display: flex; align-items: center; padding: 3px 0 0 7px; }
.st-btn i { width: 1px; height: 18px; background: #a0a0a0; margin: 0 9px; }
.cell { height: 31px; border: 1px solid #a0a0a0; border-right-color: #fff; border-bottom-color: #fff; margin-left: 4px; }
.cell svg { width: 22px; height: 22px; margin: 5px 0 0 5px; }
.zo { width: 33px; }
.statusbar .slider { width: 104px; margin-left: 3px; position: relative; }
.groove { display: block; width: 99px; height: 3px; margin: 13px 0 0 1px; border-top: 2px solid #777; border-bottom: 1px solid #fff; }
.knob { position: absolute; left: 23px; top: 0; width: 16px; height: 30px; background: #efefef; border: 1px solid #fff; border-right: 2px solid #777; border-bottom: 2px solid #777; }
.zi { width: 32px; margin-left: 2px; }

.taskbar { flex: 1; background: #cfe8ef; display: flex; align-items: center; color: #1d2224; padding-bottom: 2px; }
.taskbar > * { flex: none; }
.weather { display: flex; width: 442px; padding-left: 28px; gap: 12px; }
.weather svg { width: 36px; height: 36px; margin-top: 4px; }
.weather p { line-height: 24px; font-size: 17px; letter-spacing: .05px; }
.dim { color: #535c60; }
.start { width: 35px; height: 35px; }
.search { width: 328px; height: 48px; margin-left: 21px; border: 1px solid #b4cfd8; border-bottom: 2px solid #a4bac2; border-radius: 24px; background: #eff7f9; display: flex; align-items: center; padding-left: 15px; gap: 14px; font-size: 17.5px; color: #5b5f61; }
.search svg { width: 24px; height: 24px; }
.apps { display: flex; margin-left: 4px; }
.app { position: relative; width: 66.1px; height: 58px; display: flex; align-items: center; justify-content: center; }
.app svg { width: 36px; height: 36px; z-index: 1; }
.run::after { content: ""; position: absolute; left: 29px; bottom: 1px; width: 9px; height: 5px; border-radius: 3px; background: #7a868a; }
.active::before { content: ""; position: absolute; left: 4px; top: 0; width: 57px; height: 58px; border: 1px solid #c3dbe3; border-radius: 6px; background: #e6f3f8; }
.active::after { content: ""; position: absolute; left: 20px; bottom: 1px; width: 24px; height: 5px; border-radius: 3px; background: #0078d4; }
.kbadge { position: absolute; z-index: 2; left: 35px; top: 4px; width: 24px; height: 24px; border-radius: 50%; background: #a443b7; color: #f3d8f6; font-size: 14px; line-height: 24px; text-align: center; }
.caret { width: 16px; height: 9px; margin-left: 34px; }
.lang { width: 60px; margin-left: 19px; text-align: center; font-size: 17px; line-height: 23px; letter-spacing: -.2px; padding-top: 1px; }
.wifi { width: 24px; height: 18px; margin-left: 15px; }
.vol { width: 26px; height: 20px; margin-left: 11px; }
.bat { width: 25px; height: 15px; margin-left: 11px; }
.clock { width: 100px; margin-left: 18px; text-align: right; font-size: 17px; line-height: 24px; }
.date { letter-spacing: .6px; margin-right: -1px; }
.notif { width: 24px; height: 24px; margin-left: 16px; border-radius: 50%; background: #0067c0; color: #fff; text-align: center; font-size: 14px; line-height: 24px; }
```
